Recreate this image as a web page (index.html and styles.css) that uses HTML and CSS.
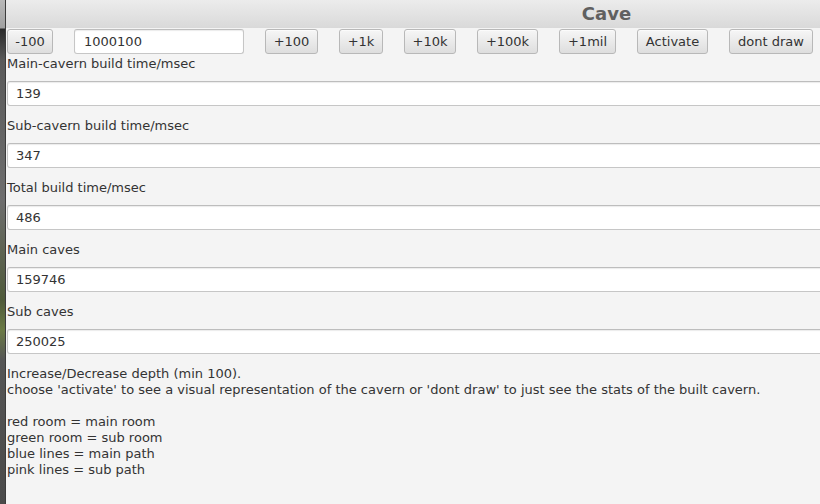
FILE: index.html
```html
<!DOCTYPE html>
<html>
<head>
<meta charset="utf-8">
<link rel="stylesheet" href="styles.css">
</head>
<body>
<div class="screen">
  <div class="desk"></div>
  <div class="window">
    <div class="titlebar"><span class="title">Cave</span></div>
    <div class="content">
      <div class="toolbar">
        <button class="btn w46">-100</button>
        <input class="depth" type="text" value="1000100">
        <button class="btn w53">+100</button>
        <button class="btn w44">+1k</button>
        <button class="btn w52">+10k</button>
        <button class="btn w61">+100k</button>
        <button class="btn w57">+1mil</button>
        <button class="btn w71">Activate</button>
        <button class="btn w84">dont draw</button>
      </div>
      <div class="stat first"><div class="label">Main-cavern build time/msec</div><div class="field">139</div></div>
      <div class="stat"><div class="label">Sub-cavern build time/msec</div><div class="field">347</div></div>
      <div class="stat"><div class="label">Total build time/msec</div><div class="field">486</div></div>
      <div class="stat"><div class="label">Main caves</div><div class="field">159746</div></div>
      <div class="stat"><div class="label">Sub caves</div><div class="field">250025</div></div>
      <div class="info">
        <p>Increase/Decrease depth (min 100).<br>choose 'activate' to see a visual representation of the cavern or 'dont draw' to just see the stats of the built cavern.</p>
        <p>red room = main room<br>green room = sub room<br>blue lines = main path<br>pink lines = sub path</p>
      </div>
    </div>
  </div>
</div>
</body>
</html>
```
FILE: styles.css
```css
html, body {
  margin: 0;
  padding: 0;
  width: 820px;
  height: 504px;
  overflow: hidden;
  background: #f4f4f4;
}
.screen {
  display: flex;
  width: 820px;
  height: 504px;
  font-family: "DejaVu Sans", sans-serif;
  font-size: 13px;
  color: #333333;
}
.desk {
  width: 6px;
  flex: none;
  background: linear-gradient(to bottom, #b9b9b9 0, #a0a0a0 28px, #2a2a2a 29px, #5a5a5a 60px, #6e6e6e 200px, #4f5a3a 300px, #6b7a45 330px, #555 360px, #4a4a4a 504px);
  border-right: 1px solid #3c3c3c;
  box-sizing: border-box;
}
.window {
  flex: 1;
  min-width: 0;
  display: flex;
  flex-direction: column;
  background: #f4f4f4;
  overflow: hidden;
}
.titlebar {
  height: 28px;
  flex: none;
  background: linear-gradient(to bottom, #ececec, #d9d9d9);
  display: flex;
  align-items: center;
  justify-content: center;
  padding-left: 387px;
  box-sizing: border-box;
}
.title {
  font-weight: bold;
  font-size: 18px;
  color: #606060;
  margin-top: -2px;
}
.content {
  padding: 1px 0 0 1px;
}
.toolbar {
  display: flex;
  gap: 21px;
  height: 25px;
  white-space: nowrap;
}
.btn {
  font-family: "DejaVu Sans", sans-serif;
  font-size: 13px;
  color: #333;
  height: 25px;
  padding: 0;
  margin: 0;
  border: 1px solid #b8b8b8;
  border-radius: 3px;
  background: linear-gradient(to bottom, #f6f6f6, #dedede);
  box-shadow: inset 0 1px 0 #fbfbfb;
  line-height: 23px;
  text-align: center;
  box-sizing: border-box;
  flex: none;
}
.w46 { width: 46px; }
.w53 { width: 53px; }
.w44 { width: 44px; }
.w52 { width: 52px; }
.w61 { width: 61px; }
.w57 { width: 57px; }
.w71 { width: 71px; }
.w84 { width: 84px; }
.depth {
  font-family: "DejaVu Sans", sans-serif;
  font-size: 13px;
  color: #333;
  width: 170px;
  height: 25px;
  box-sizing: border-box;
  margin: 0;
  padding: 0 8px 0 9px;
  border: 1px solid #c6c6c6;
  border-top-color: #bdbdbd;
  border-radius: 3px;
  background: #fff;
  box-shadow: inset 0 1px 1px #ececec;
  flex: none;
}
.stat {
  margin-top: 12px;
}
.stat.first {
  margin-top: 2px;
}
.label {
  height: 16px;
  line-height: 16px;
  margin-bottom: 9px;
  white-space: nowrap;
}
.field {
  height: 25px;
  box-sizing: border-box;
  width: 830px;
  border: 1px solid #c6c6c6;
  border-top-color: #bdbdbd;
  border-radius: 3px;
  background: #fff;
  box-shadow: inset 0 1px 1px #ececec;
  padding-left: 8px;
  line-height: 23px;
}
.info {
  margin-top: 12px;
  line-height: 16.3px;
}
.info p {
  margin: 0 0 15px 0;
  white-space: nowrap;
}
```
